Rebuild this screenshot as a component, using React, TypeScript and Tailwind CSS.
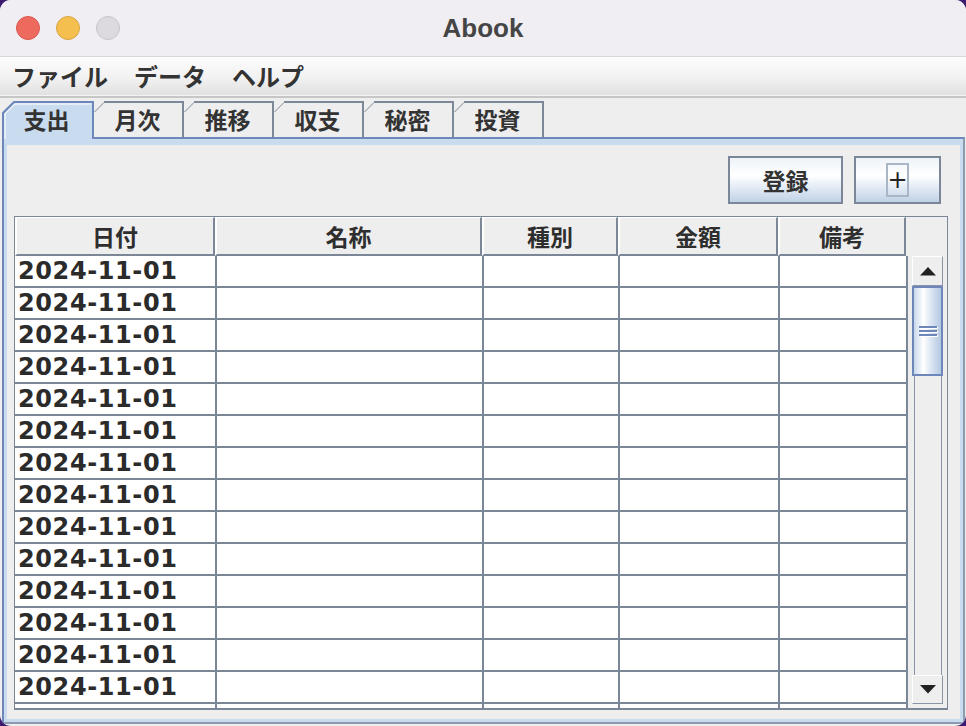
import React from "react";

const JP = { fontFamily: '"Noto Sans CJK JP", "Noto Sans", sans-serif' };
const NUM = { fontFamily: '"DejaVu Sans", "Noto Sans CJK JP", sans-serif' };

const tabs = ["支出", "月次", "推移", "収支", "秘密", "投資"];
const cols = [202, 267, 136, 160, 128];
const headCols = [
  { w: 200, t: "日付" },
  { w: 267, t: "名称" },
  { w: 136, t: "種別" },
  { w: 160, t: "金額" },
  { w: 128, t: "備考" },
];

function Tab({ label, selected }: { label: string; selected: boolean }) {
  if (selected) {
    return (
      <div className="relative z-10 h-[38px] w-[92px] -mb-[2px] shrink-0">
        <div className="absolute inset-0 bg-[#c9dcef] [clip-path:polygon(12px_0,100%_0,100%_100%,0_100%,0_12px)]" />
        <svg className="absolute inset-0" width="92" height="38" viewBox="0 0 92 38">
          <polyline points="1,38 1,12 12,1 91,1 91,38" fill="none" stroke="#6d87bb" strokeWidth="2" />
          <polyline points="3,38 3,13 13,3 89,3" fill="none" stroke="#ffffff" strokeWidth="1" />
        </svg>
        <div className="relative flex h-[36px] items-center justify-center pr-[3px] text-[23px] font-bold text-[#333]" style={JP}>
          {label}
        </div>
      </div>
    );
  }
  return (
    <div className="relative h-[36px] w-[90px] shrink-0">
      <div className="absolute inset-0 bg-[#eeeeee] [clip-path:polygon(10px_0,100%_0,100%_100%,0_100%,0_10px)]" />
      <svg className="absolute inset-0" width="90" height="36" viewBox="0 0 90 36">
        <line x1="0.5" y1="11" x2="10" y2="1.5" stroke="#7d8898" strokeWidth="1" />
        <polyline points="10,1 89,1 89,36" fill="none" stroke="#7d8898" strokeWidth="2" />
      </svg>
      <div className="relative flex h-[36px] items-center justify-center pr-[3px] text-[23px] font-bold text-[#333]" style={JP}>
        {label}
      </div>
    </div>
  );
}

function Triangle({ down }: { down?: boolean }) {
  return (
    <svg width="16" height="9" viewBox="0 0 16 9">
      {down ? <polygon points="0,0 16,0 8,8.5" fill="#222" /> : <polygon points="8,0 16,8.5 0,8.5" fill="#222" />}
    </svg>
  );
}

export default function App() {
  const rows = Array.from({ length: 15 });
  return (
    <div className="h-[726px] w-[966px] overflow-hidden bg-[#3b1a70]">
      <div className="flex h-full flex-col overflow-hidden rounded-[11px] bg-[#eeeeee]">
        {/* Title bar */}
        <div className="grid h-[56px] shrink-0 grid-cols-[1fr_auto_1fr] items-center bg-[#f0eef3]">
          <div className="flex items-center gap-4 pl-4">
            <div className="h-[24px] w-[24px] rounded-full border border-[#d9574c] bg-[#ee6a5f]" />
            <div className="h-[24px] w-[24px] rounded-full border border-[#d8a444] bg-[#f5bf4f]" />
            <div className="h-[24px] w-[24px] rounded-full border border-[#c6c4ca] bg-[#dcdadf]" />
          </div>
          <div className="text-[26px] font-bold text-[#454545]" style={{ fontFamily: '"Liberation Sans", Arial, sans-serif' }}>
            Abook
          </div>
          <div />
        </div>
        <div className="h-px shrink-0 bg-[#d6d5d8]" />
        {/* Menu bar */}
        <div className="flex h-[38px] shrink-0 items-center gap-[26px] bg-gradient-to-b from-[#fcfcfc] via-[#f3f3f3] to-[#e1e1e1] pl-[12px] text-[24px] font-bold text-[#333]" style={JP}>
          <span>ファイル</span>
          <span>データ</span>
          <span>ヘルプ</span>
        </div>
        <div className="h-px shrink-0 bg-[#f4f4f4]" />
        <div className="h-[2px] shrink-0 bg-[#c6c6c6]" />
        {/* Content */}
        <div className="flex min-h-0 flex-1 flex-col pl-[2px] pr-px pt-[3px] pb-[2px]">
          <div className="flex h-[36px] shrink-0 items-end">
            {tabs.map((t, i) => (
              <Tab key={t} label={t} selected={i === 0} />
            ))}
          </div>
          <div className="flex min-h-0 flex-1 flex-col border-2 border-[#6d87bb] border-r-[#8c9ab0] border-b-[#8c9ab0]">
            <div className="flex min-h-0 flex-1 flex-col border-x-[3px] border-b-[3px] border-t-[6px] border-[#c9dcef] bg-[#eeeeee] pl-[7px] pr-[12px] pt-[11px] pb-[9px]">
              {/* Buttons */}
              <div className="flex shrink-0 justify-end gap-[11px] pr-[7px]">
                <div className="flex h-[48px] w-[115px] items-center justify-center border-2 border-[#7b8799] bg-[linear-gradient(180deg,#eef3f9_0%,#ffffff_40%,#c0d2e7_100%)] text-[23px] font-bold text-[#333]" style={JP}>
                  登録
                </div>
                <div className="flex h-[48px] w-[87px] items-center justify-center border-2 border-[#7b8799] bg-[linear-gradient(180deg,#eef3f9_0%,#ffffff_40%,#c0d2e7_100%)]">
                  <div className="flex h-[34px] w-[23px] items-center justify-center border-2 border-[#aab6c6] text-[24px] text-[#222]" style={NUM}>
                    +
                  </div>
                </div>
              </div>
              {/* Table */}
              <div className="mt-[12px] flex min-h-0 flex-1 flex-col overflow-hidden border border-b-2 border-[#7b8797]">
                <div className="flex h-[39px] shrink-0">
                  {headCols.map((c) => (
                    <div
                      key={c.t}
                      className="flex shrink-0 items-center justify-center border-t border-l-2 border-r-2 border-b-2 border-t-white border-l-white border-r-[#7b8797] border-b-[#7b8797] bg-[#eeeeee] text-[23px] font-bold text-[#2e2e2e]"
                      style={{ ...JP, width: c.w }}
                    >
                      {c.t}
                    </div>
                  ))}
                  <div className="flex-1 bg-[#eeeeee]" />
                </div>
                <div className="flex min-h-0 flex-1">
                  <div className="flex min-h-0 flex-col overflow-hidden">
                    {rows.map((_, r) => (
                      <div key={r} className="flex h-[32px] shrink-0">
                        {cols.map((w, c) => (
                          <div
                            key={c}
                            className="flex shrink-0 items-center border-r-2 border-b-2 border-[#7b8797] bg-white pl-[3px] text-[24px] font-bold leading-none tracking-[0.6px] text-[#2b2b2b]"
                            style={{ ...NUM, width: w }}
                          >
                            {c === 0 && r < 14 ? "2024-11-01" : ""}
                          </div>
                        ))}
                      </div>
                    ))}
                  </div>
                  <div className="flex w-[39px] shrink-0 flex-col bg-[#eeeeee] px-[4px] pb-[4px]">
                    <div className="flex h-[30px] shrink-0 items-center justify-center border-t border-l border-white border-r border-b border-r-[#8995a7] border-b-[#8995a7] bg-[#eeeeee]">
                      <Triangle />
                    </div>
                    <div className="flex h-[90px] shrink-0 flex-col items-center justify-center gap-[2px] border-2 border-[#6d87bb] bg-[linear-gradient(90deg,#c9d8ec_0%,#ffffff_35%,#dfe8f4_60%,#b4c8e2_100%)]">
                      <div className="h-[2px] w-[18px] bg-[#6d87bb] shadow-[1px_1px_0_#ffffff]" />
                      <div className="h-[2px] w-[18px] bg-[#6d87bb] shadow-[1px_1px_0_#ffffff]" />
                      <div className="h-[2px] w-[18px] bg-[#6d87bb] shadow-[1px_1px_0_#ffffff]" />
                    </div>
                    <div className="ml-[2px] mr-px min-h-0 flex-1 border-x border-[#8995a7]" />
                    <div className="flex h-[29px] shrink-0 items-center justify-center border-t border-l border-white border-r border-b border-r-[#8995a7] border-b-[#8995a7] bg-[#eeeeee]">
                      <Triangle down />
                    </div>
                  </div>
                </div>
              </div>
            </div>
          </div>
        </div>
      </div>
    </div>
  );
}
